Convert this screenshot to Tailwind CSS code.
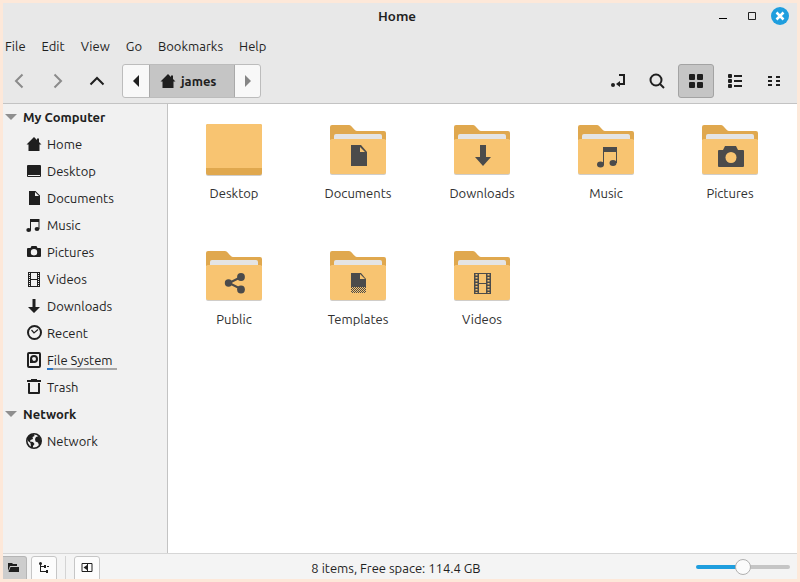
<!DOCTYPE html>
<html lang="en">
  <head>
    <title>Home</title>
    <meta charset="UTF-8" />
    <meta name="viewport" content="width=device-width, initial-scale=1" />
    <script src="https://cdn.jsdelivr.net/npm/@tailwindcss/browser@4"></script>
  </head>
  <body class="h-screen overflow-hidden bg-[#fde8d9] p-[3px] font-['Ubuntu','Noto_Sans',sans-serif] text-[13px] leading-5 text-[#1f1f1f]">

    <!-- Shared icons -->
    <svg class="hidden">
      <symbol id="home" viewBox="0 0 16 16"><path d="M8 1 .5 8.500h2V15h11V8.500h2L13 6V2.500h-2V4z" /></symbol>
      <symbol id="desktop" viewBox="0 0 16 16"><path fill-rule="evenodd" d="M2 2h12a1 1 0 0 1 1 1v10a1 1 0 0 1-1 1H2a1 1 0 0 1-1-1V3a1 1 0 0 1 1-1zM2 12v1h12v-1z" /></symbol>
      <symbol id="document" viewBox="0 0 16 16"><path fill-rule="evenodd" d="M3 1h6.500L14 5.500V15H3zM9 2v4h4z" /></symbol>
      <symbol id="music" viewBox="0 0 16 16"><path d="M4 2h9.500v10h-1V5H5v8H4z" /><ellipse cx="2.700" cy="13" rx="2.400" ry="2" /><ellipse cx="11" cy="12" rx="2.400" ry="2" /></symbol>
      <symbol id="camera" viewBox="0 0 16 16"><path fill-rule="evenodd" d="M5.500 2h5l1 2H14a1 1 0 0 1 1 1v7a1 1 0 0 1-1 1H2a1 1 0 0 1-1-1V5a1 1 0 0 1 1-1h2.500zM8 5a3.200 3.200 0 1 0 0 6.400A3.200 3.200 0 0 0 8 5z" /></symbol>
      <symbol id="film" viewBox="0 0 16 16"><path fill-rule="evenodd" d="M2 1h12v15H2zM5 2v6h6V2zM5 9v6h6V9zM3 2v1h1V2zM3 4v1h1V4zM3 6v1h1V6zM3 8v1h1V8zM3 10v1h1v-1zM3 12v1h1v-1zM3 14v1h1v-1zM12 2v1h1V2zM12 4v1h1V4zM12 6v1h1V6zM12 8v1h1V8zM12 10v1h1v-1zM12 12v1h1v-1zM12 14v1h1v-1z" /></symbol>
      <symbol id="download" viewBox="0 0 16 16"><path d="M6.500 1h3v8H14l-6 6-6-6h4.500z" /></symbol>
      <symbol id="clock" viewBox="0 0 16 16"><circle cx="8.500" cy="7.500" r="6.500" fill="none" stroke="currentColor" stroke-width="2" /><path d="m5.500 5 2.500 3 4-3.500" fill="none" stroke="currentColor" stroke-width="1.200" /></symbol>
      <symbol id="disk" viewBox="0 0 16 16"><rect x="2" y="1" width="12" height="14" rx="1" fill="none" stroke="currentColor" stroke-width="2" /><circle cx="8" cy="7" r="3" fill="none" stroke="currentColor" stroke-width="2" /><path d="M4 7.500h2.500L7 11H4z" /></symbol>
      <symbol id="trash" viewBox="0 0 16 16"><path fill-rule="evenodd" d="M5 0h6v1h4v2H1V1h4zM2 4h2v9h8V4h2v10a1 1 0 0 1-1 1H3a1 1 0 0 1-1-1z" /></symbol>
      <symbol id="globe" viewBox="0 0 16 16"><circle cx="8" cy="8" r="7.200" fill="none" stroke="currentColor" stroke-width="1.600" /><path d="M1 6 4 1.500 8 1l.5 2-2 1 .5 2-2.500 1L4 8.500l3 .5 1.500 2-1.500 2v2L5 14l-.500-4L2 8zM10 4l3-1 2 4v3l-2 2.500-1-3-2.500-1L9 6z" /></symbol>
      <symbol id="folder" viewBox="0 0 64 64">
        <path d="M4 20h56v35a2 2 0 0 1-2 2H6a2 2 0 0 1-2-2z" fill="#d0cdc9" />
        <path d="M4 22V9a2 2 0 0 1 2-2h17c3 0 5 6 8 6h27a2 2 0 0 1 2 2v7z" fill="#e0a84e" />
        <path d="M8 23v-5a2 2 0 0 1 2-2h44a2 2 0 0 1 2 2v5z" fill="#e4e4e4" />
        <path d="M4 23a2 2 0 0 1 2-2h52a2 2 0 0 1 2 2v31a2 2 0 0 1-2 2H6a2 2 0 0 1-2-2z" fill="#f8c471" />
      </symbol>
    </svg>

    <div class="flex h-full flex-col overflow-hidden bg-[#e8e8e8]">
      <header class="relative flex h-[26px] shrink-0 items-center justify-center">
        <h1 class="pr-[6px] font-['Noto_Sans',sans-serif] font-semibold">Home</h1>
        <div class="absolute inset-y-0 right-2 flex items-center gap-[9px]">
          <button aria-label="Minimize" class="flex w-5 justify-center"><svg class="size-4" viewBox="0 0 16 16"><path d="M4 10h8v1H4z" /></svg></button>
          <button aria-label="Maximize" class="flex w-5 justify-center"><svg class="size-4" viewBox="0 0 16 16"><path d="M4.500 4.500h7v7h-7z" fill="none" stroke="#1f1f1f" /></svg></button>
          <button aria-label="Close" class="flex size-[18px] items-center justify-center rounded-full bg-[#1f9ede]"><svg class="size-4" viewBox="0 0 16 16"><path d="m4.500 4.500 7 7m0-7-7 7" stroke="#fff" stroke-width="2.500" /></svg></button>
        </div>
      </header>

      <nav class="mt-px flex h-8 shrink-0 items-center gap-4 pl-[2px]">
        <button>File</button>
        <button>Edit</button>
        <button>View</button>
        <button>Go</button>
        <button>Bookmarks</button>
        <button>Help</button>
      </nav>

      <div class="flex h-[42px] shrink-0 items-start gap-[7px] border-b border-[#c3c3c3] pt-[2px] pr-[5px]">
        <button aria-label="Back" class="flex h-[34px] w-8 items-center justify-center text-[#8b8b8b]"><svg class="size-4" viewBox="0 0 16 16"><path d="M11.500 1.500 5 8l6.500 6.500" fill="none" stroke="currentColor" stroke-width="2" /></svg></button>
        <button aria-label="Forward" class="flex h-[34px] w-8 items-center justify-center text-[#8b8b8b]"><svg class="size-4" viewBox="0 0 16 16"><path d="M4.500 1.500 11 8l-6.500 6.500" fill="none" stroke="currentColor" stroke-width="2" /></svg></button>
        <button aria-label="Up" class="flex h-[34px] w-8 items-center justify-center"><svg class="size-4" viewBox="0 0 16 16"><path d="M1.500 11.500 8 5l6.500 6.500" fill="none" stroke="currentColor" stroke-width="2" /></svg></button>
        <div class="ml-[2px] flex h-[34px] overflow-hidden rounded-[3px] border border-[#bcbcbc] bg-[#f8f8f8]">
          <button aria-label="Scroll left" class="flex w-[26px] items-center justify-center"><svg class="size-4" viewBox="0 0 16 16"><path d="M11 2v12L5 8z" fill="currentColor" /></svg></button>
          <button class="flex w-[86px] items-center gap-[5px] border-x border-[#a9a9a9] bg-[#c5c5c5] pl-[10px] font-bold"><svg class="size-4" fill="currentColor"><use href="#home" /></svg>james</button>
          <button aria-label="Scroll right" class="flex w-[25px] items-center justify-center text-[#858585]"><svg class="size-4" viewBox="0 0 16 16"><path d="M5 2v12l6-6z" fill="currentColor" /></svg></button>
        </div>
        <div class="ml-auto flex gap-[3px]">
          <button aria-label="Toggle location entry" class="flex h-[34px] w-9 items-center justify-center"><svg class="size-4" viewBox="0 0 16 16"><path d="M9 2h5v9H8" fill="none" stroke="currentColor" stroke-width="2" /><path d="M10 8v6l-4-3z" fill="currentColor" /><circle cx="3" cy="12" r="2" fill="currentColor" /></svg></button>
          <button aria-label="Search" class="flex h-[34px] w-9 items-center justify-center"><svg class="size-4" viewBox="0 0 16 16"><circle cx="7" cy="7" r="5.500" fill="none" stroke="currentColor" stroke-width="2" /><path d="m11 11 4 4" stroke="currentColor" stroke-width="2" /></svg></button>
          <button aria-label="Icon view" class="flex h-[34px] w-9 items-center justify-center rounded-[3px] border border-[#a3a3a3] bg-[#c5c5c5]"><svg class="size-4" viewBox="0 0 16 16" fill="currentColor"><rect x="1" y="1" width="6" height="6" rx="1" /><rect x="9" y="1" width="6" height="6" rx="1" /><rect x="1" y="9" width="6" height="6" rx="1" /><rect x="9" y="9" width="6" height="6" rx="1" /></svg></button>
          <button aria-label="List view" class="flex h-[34px] w-9 items-center justify-center"><svg class="size-4" viewBox="0 0 16 16" fill="currentColor"><rect x="1" y="1" width="4" height="4" rx="1" /><rect x="1" y="6" width="4" height="4" rx="1" /><rect x="1" y="11" width="4" height="4" rx="1" /><path d="M7 2h8v2H7zM7 7h8v2H7zM7 12h8v2H7z" /></svg></button>
          <button aria-label="Compact view" class="flex h-[34px] w-9 items-center justify-center"><svg class="size-4" viewBox="0 0 16 16" fill="currentColor"><path d="M2 3h4v2H2zM2 7h4v2H2zM2 11h4v2H2zM10 3h4v2h-4zM10 7h4v2h-4zM10 11h4v2h-4z" /></svg></button>
        </div>
      </div>

      <div class="flex min-h-0 flex-1">
        <aside class="w-[165px] shrink-0 border-r border-[#c3c3c3] bg-[#f1f1f1] *:h-[27px] *:pb-px">
          <h2 class="flex items-center gap-[6px] pl-[2px] font-bold"><svg class="h-[6px] w-3" viewBox="0 0 12 6"><path d="M0 0h12L6 6z" fill="#8f8f8f" /></svg>My Computer</h2>
          <a href="#" class="flex items-center gap-[5px] pl-[23px]"><svg class="size-4" fill="currentColor"><use href="#home" /></svg>Home</a>
          <a href="#" class="flex items-center gap-[5px] pl-[23px]"><svg class="size-4" fill="currentColor"><use href="#desktop" /></svg>Desktop</a>
          <a href="#" class="flex items-center gap-[5px] pl-[23px]"><svg class="size-4" fill="currentColor"><use href="#document" /></svg>Documents</a>
          <a href="#" class="flex items-center gap-[5px] pl-[23px]"><svg class="size-4" fill="currentColor"><use href="#music" /></svg>Music</a>
          <a href="#" class="flex items-center gap-[5px] pl-[23px]"><svg class="size-4" fill="currentColor"><use href="#camera" /></svg>Pictures</a>
          <a href="#" class="flex items-center gap-[5px] pl-[23px]"><svg class="size-4" fill="currentColor"><use href="#film" /></svg>Videos</a>
          <a href="#" class="flex items-center gap-[5px] pl-[23px]"><svg class="size-4" fill="currentColor"><use href="#download" /></svg>Downloads</a>
          <a href="#" class="flex items-center gap-[5px] pl-[23px]"><svg class="size-4" fill="currentColor"><use href="#clock" /></svg>Recent</a>
          <a href="#" class="flex items-center gap-[5px] pl-[23px]"><svg class="size-4" fill="currentColor"><use href="#disk" /></svg>
            <span class="relative pr-1">File System<span class="absolute inset-x-0 bottom-0 h-[2px] bg-[#a8a8a8]"><span class="block h-full bg-[#2a76c6]" style="width: 8%"></span></span></span></a>
          <a href="#" class="flex items-center gap-[5px] pl-[23px]"><svg class="size-4" fill="currentColor"><use href="#trash" /></svg>Trash</a>
          <h2 class="flex items-center gap-[6px] pl-[2px] font-bold"><svg class="h-[6px] w-3" viewBox="0 0 12 6"><path d="M0 0h12L6 6z" fill="#8f8f8f" /></svg>Network</h2>
          <a href="#" class="flex items-center gap-[5px] pl-[23px]"><svg class="size-4" fill="currentColor"><use href="#globe" /></svg>Network</a>
        </aside>

        <main class="grid flex-1 auto-rows-[126px] grid-cols-[repeat(auto-fill,124px)] content-start bg-white pt-[14px] pl-1 text-[#303030]">
          <a href="#" class="flex flex-col items-center gap-px">
            <svg class="size-16" viewBox="0 0 64 64"><rect x="4" y="7" width="56" height="51" rx="2" fill="#d0cdc9" /><rect x="4" y="6" width="56" height="51" rx="2" fill="#e0a84e" /><path d="M4 50V8a2 2 0 0 1 2-2h52a2 2 0 0 1 2 2v42z" fill="#f8c471" /></svg>
            Desktop
          </a>
          <a href="#" class="flex flex-col items-center gap-px">
            <svg class="size-16" viewBox="0 0 64 64" color="#4b4b4b" fill="currentColor"><use href="#folder" /><path d="M25 27h10l6 7v14H25z" /><path d="M34 29v5h5z" fill="#f8c471" /></svg>
            Documents
          </a>
          <a href="#" class="flex flex-col items-center gap-px">
            <svg class="size-16" viewBox="0 0 64 64" color="#4b4b4b" fill="currentColor"><use href="#folder" /><path d="M30 27h6v12h5l-8 9-8-9h5z" /></svg>
            Downloads
          </a>
          <a href="#" class="flex flex-col items-center gap-px">
            <svg class="size-16" viewBox="0 0 64 64" color="#4b4b4b" fill="currentColor"><use href="#folder" /><path d="M29 29h14v16h-1V34H30v13h-1z" /><ellipse cx="26.500" cy="46.500" rx="3.500" ry="3" /><ellipse cx="39" cy="45" rx="3.500" ry="3" /></svg>
            Music
          </a>
          <a href="#" class="flex flex-col items-center gap-px">
            <svg class="size-16" viewBox="0 0 64 64" color="#4b4b4b" fill="currentColor"><use href="#folder" /><path d="M27 28h11l2 4h5a1 1 0 0 1 1 1v15a1 1 0 0 1-1 1H21a1 1 0 0 1-1-1V33a1 1 0 0 1 1-1h4z" /><circle cx="33" cy="39.500" r="5.500" fill="#f8c471" /></svg>
            Pictures
          </a>
          <a href="#" class="flex flex-col items-center gap-px">
            <svg class="size-16" viewBox="0 0 64 64" color="#4b4b4b" fill="currentColor"><use href="#folder" /><path d="m39 33-12 6 12 6" fill="none" stroke="currentColor" stroke-width="2" /><circle cx="26.500" cy="39" r="3.700" /><circle cx="39" cy="33" r="3.900" /><circle cx="39" cy="45.500" r="3.900" /></svg>
            Public
          </a>
          <a href="#" class="flex flex-col items-center gap-px">
            <svg class="size-16" viewBox="0 0 64 64" color="#4b4b4b" fill="currentColor"><use href="#folder" /><path d="M25 29h10l5 6v8H25z" /><path d="M34 30v5h5z" fill="#f8c471" /><path d="M25 43.500h15M25 45.500h15M25 47.500h15" stroke="currentColor" stroke-dasharray="1 1" /><path d="M26 44.500h14M26 46.500h14M26 48.500h14" stroke="currentColor" stroke-dasharray="1 1" /></svg>
            Templates
          </a>
          <a href="#" class="flex flex-col items-center gap-px">
            <svg class="size-16" viewBox="0 0 64 64" color="#4b4b4b" fill="currentColor"><use href="#folder" /><path fill-rule="evenodd" d="M24 29h17v21H24zM29 30v9h7v-9zM29 40v9h7v-9z" /><path d="M26.500 30v19M38.500 30v19" stroke="#f8c471" stroke-width="2" stroke-dasharray="1.500 1.500" /></svg>
            Videos
          </a>
        </main>
      </div>

      <footer class="flex h-[26px] shrink-0 items-start border-t border-[#d6d6d6] bg-[#f4f4f4] pt-[2px] pr-[7px]">
        <button aria-label="Show places" class="flex h-6 w-6 items-center justify-center rounded-tr-[3px] border border-l-0 border-[#b5b5b5] bg-[#cdcdcd] pr-1"><svg class="size-4" viewBox="0 0 16 16" fill="currentColor"><path d="M3 3h4l1 1h4v2H5l-2 5zM5.500 7H14v5H3.500z" /></svg></button>
        <button aria-label="Show tree" class="ml-1 flex h-6 w-[26px] items-center justify-center rounded-t-[3px] border border-[#c6c6c6] bg-[#fcfcfc]"><svg class="size-4" viewBox="0 0 16 16" fill="currentColor"><circle cx="4.500" cy="3.500" r="1.500" /><path d="M4 3h1v3h4v1H5v4h5v1H4z" /><path d="M8 5h2v3H8zM10 10h2v3h-2zM11 6h2v1h-2z" /></svg></button>
        <span class="ml-2 h-6 w-px bg-[#d4d4d4]"></span>
        <button aria-label="Hide sidebar" class="ml-2 flex h-6 w-[26px] items-center justify-center rounded-t-[3px] border border-[#c6c6c6] bg-[#fcfcfc]"><svg class="size-4" viewBox="0 0 16 16" fill="currentColor"><path d="M3 3.500h10v8H3zM8.500 4v8" fill="none" stroke="currentColor" /><path d="M8 5v5L4.500 7.500z" /></svg></button>
        <p class="flex-1 pt-[2px] pr-1 text-center">8 items, Free space: 114.4 GB</p>
        <input type="range" min="0" max="100" value="50" aria-label="Zoom" class="mt-[2px] h-[18px] w-[94px] appearance-none bg-transparent [&::-webkit-slider-runnable-track]:h-1 [&::-webkit-slider-runnable-track]:rounded-full [&::-webkit-slider-runnable-track]:bg-linear-to-r [&::-webkit-slider-runnable-track]:from-[#1f9ede] [&::-webkit-slider-runnable-track]:from-50% [&::-webkit-slider-runnable-track]:to-[#c5c5c5] [&::-webkit-slider-runnable-track]:to-50% [&::-webkit-slider-thumb]:-mt-[6px] [&::-webkit-slider-thumb]:size-4 [&::-webkit-slider-thumb]:appearance-none [&::-webkit-slider-thumb]:rounded-full [&::-webkit-slider-thumb]:border [&::-webkit-slider-thumb]:border-[#b0b0b0] [&::-webkit-slider-thumb]:bg-[#fbfbfb]" />
      </footer>
    </div>
  </body>
</html>
